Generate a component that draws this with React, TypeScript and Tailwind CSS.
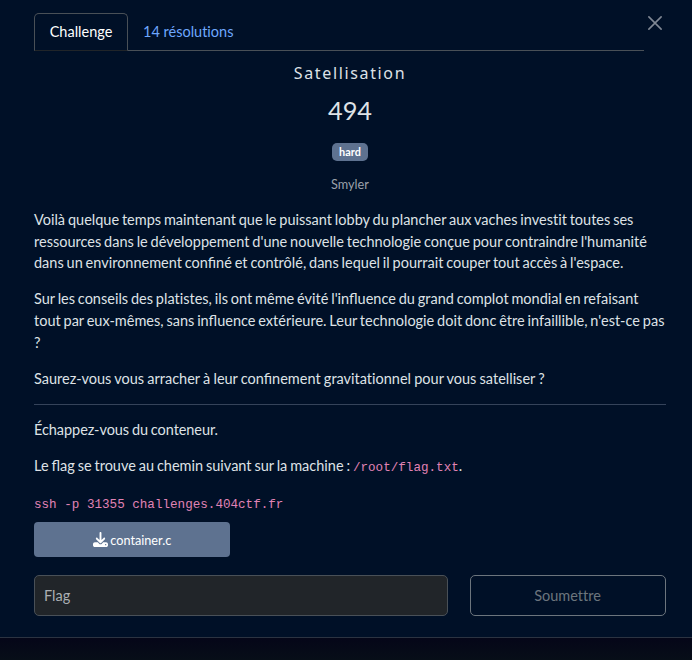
import type { ReactNode } from "react";
import { FaDownload } from "react-icons/fa6";

function Lig({ children }: { children: ReactNode }) {
  return <span className="[font-variant-ligatures:common-ligatures]">{children}</span>;
}

export default function App() {
  return (
    <div className="h-[660px] w-[692px] overflow-hidden bg-[#050816] font-[Lato,sans-serif] text-[14.5px] leading-[21.75px] text-[#dee2e6] [font-variant-ligatures:no-common-ligatures]">
      <main className="relative h-[638px] border-b border-[#2b3341] bg-[#001027] pt-[13px] pr-[26px] pl-[34px]">
        <button aria-label="Fermer" className="absolute left-[648px] top-[16px]">
          <svg width="14" height="14" viewBox="0 0 16 16" fill="none" stroke="#808894" strokeWidth="1.8" strokeLinecap="round">
            <path d="M1 1 15 15M15 1 1 15" />
          </svg>
        </button>
        <nav className="flex h-[38px] w-[610px] border-b border-[#495057]">
          <button className="h-[38px] w-[94px] rounded-t-[5px] border border-b-[#212529] border-[#495057] bg-[#001027] pb-px text-white">Challenge</button>
          <button className="ml-[15px] text-[#6ea8fe]">14 résolutions</button>
        </nav>
        <header className="flex flex-col items-center">
          <h1 className="mt-[11px] font-['Noto_Sans',sans-serif] text-[16px] leading-[22px] tracking-[1.65px]">Satellisation</h1>
          <p className="mt-[10px] text-[25.4px] leading-[32px]">494</p>
          <span className="mt-[17px] flex h-[18px] w-[36px] items-center justify-center rounded-[5px] bg-[#5e7290] text-[10.9px] font-bold text-white">hard</span>
          <p className="mt-[13px] text-[12.7px] leading-[20px] text-[#9ba1aa]">Smyler</p>
        </header>
        <section className="mt-[14.8px] [word-spacing:-0.85px]">
          <p>
            Voilà quelque temps maintenant que le puissant lobby du plancher aux vaches investit toutes ses<br />
            ressources dans le développement d'une nouvelle technologie conçue pour contraindre l'humanité<br />
            dans un environnement <Lig>confiné</Lig> et contrôlé, dans lequel il pourrait couper tout accès à l'espace.
          </p>
          <p className="mt-[14.3px]">
            Sur les conseils des platistes, ils ont même évité l'<Lig>influence</Lig> du grand complot mondial en refaisant<br />
            tout par eux-mêmes, sans <Lig>influence</Lig> extérieure. Leur technologie doit donc être infaillible, n'est-ce pas<br />
            ?
          </p>
          <p className="mt-[14.5px] [word-spacing:-0.5px]">Saurez-vous vous arracher à leur <Lig>confinement</Lig> gravitationnel pour vous satelliser ?</p>
        </section>
        <hr className="mt-[14px] mb-[14px] border-[#35435a]" />
        <section className="[word-spacing:-0.83px]">
          <p className="tracking-[-0.06px]">Échappez-vous du conteneur.</p>
          <p className="mt-[14.5px]">
            Le <Lig>flag</Lig> se trouve au chemin suivant sur la machine : <code className="font-['Liberation_Mono',monospace] text-[12.6px] text-[#e083b5]">/root/flag.txt</code>.
          </p>
          <pre className="mt-[16.5px] font-['Liberation_Mono',monospace] text-[12.6px] leading-[19px] text-[#e083b5] [word-spacing:0px]">ssh -p 31355 challenges.404ctf.fr</pre>
        </section>
        <button className="mt-[7px] flex h-[35px] w-[196px] items-center justify-center gap-[2.5px] rounded-[4px] bg-[#5e7290] pt-px text-[12.7px] text-white">
          <FaDownload size={15} className="-mt-px" />
          <span className="pt-[2px]">container.c</span>
        </button>
        <form className="mt-[18px] flex gap-[22px]">
          <input placeholder="Flag" className="h-[41px] w-[414px] rounded-[5px] border border-[#495057] bg-[#212529] px-[9px] placeholder:text-[#abafb3]" />
          <button type="button" className="h-[41px] w-[196px] rounded-[5px] border border-[#6c757d] pr-px text-[#6c757d]">Soumettre</button>
        </form>
      </main>
      <footer className="h-[22px] bg-linear-to-b from-[#050618] to-[#070e18]" />
    </div>
  );
}
